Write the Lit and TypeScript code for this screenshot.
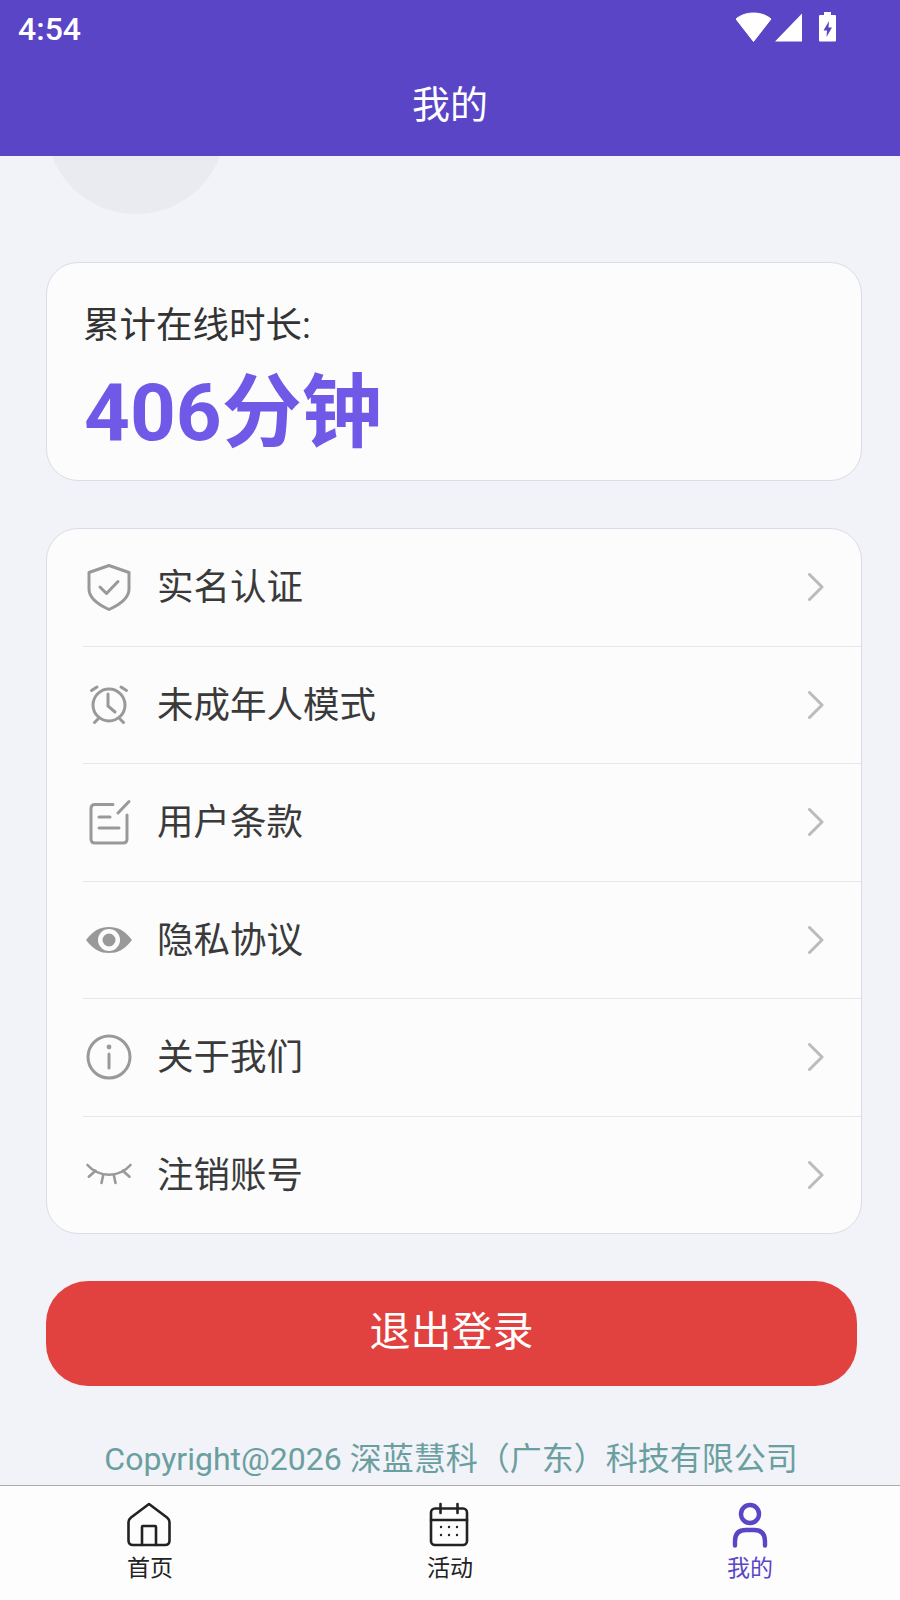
import { LitElement, html, css, svg } from "lit";
import { customElement } from "lit/decorators.js";

const rowIcons = [
  svg`<path d="M24 2.5 L44 9.5 V26 C44 36 34 42 24 46.5 C14 42 4 36 4 26 V9.5 Z" fill="none" stroke="#999" stroke-width="3" stroke-linejoin="round"/><path d="M15 24 L21.5 30.5 L33 18.5" fill="none" stroke="#999" stroke-width="3" stroke-linecap="round" stroke-linejoin="round"/>`,
  svg`<g fill="none" stroke="#999" stroke-width="3" stroke-linecap="round"><circle cx="24" cy="24" r="16"/><path d="M23 13 V25 L30 31"/><path d="M6.5 9.5 L12 6"/><path d="M41.5 9.5 L36 6"/><path d="M13 38 L9.5 41.5"/><path d="M35 38 L38.5 41.5"/></g>`,
  svg`<g fill="none" stroke="#999" stroke-width="3" stroke-linecap="round" stroke-linejoin="round"><path d="M28 6.5 H10 Q6 6.5 6 10.5 V41 Q6 45 10 45 H38 Q42 45 42 41 V17"/><path d="M33 15 L44 3.5"/><path d="M14 19 H25"/><path d="M14 30 H34"/></g>`,
  svg`<path d="M1 24 C9 14 15 11 24 11 C33 11 39 14 47 24 C39 34 33 37 24 37 C15 37 9 34 1 24 Z" fill="#999"/><circle cx="24" cy="24" r="11" fill="#fcfcfd"/><circle cx="24" cy="24" r="6.5" fill="#999"/>`,
  svg`<g fill="none" stroke="#999" stroke-width="3" stroke-linecap="round"><circle cx="24" cy="24" r="21"/><path d="M24 21 V35"/></g><circle cx="24" cy="14" r="2.4" fill="#999"/>`,
  svg`<g fill="none" stroke="#999" stroke-width="2.6" stroke-linecap="round"><path d="M2.5 14 C14 27 34 27 45.5 14"/><path d="M10.5 19.7 L3.8 25.7"/><path d="M18.2 24 L16.5 32"/><path d="M28.8 24 L30.5 32"/><path d="M37.8 19.7 L44.5 25.7"/></g>`,
];

const rows = ["实名认证", "未成年人模式", "用户条款", "隐私协议", "关于我们", "注销账号"];

@customElement("app-root")
export class AppRoot extends LitElement {
  static styles = css`
    :host {
      display: flex;
      flex-direction: column;
      height: 1600px;
      width: 900px;
      overflow: hidden;
      background: #f2f2f9;
      font-family: Roboto, "Noto Sans CJK SC", sans-serif;
      color: #333;
    }
    .header {
      height: 156px;
      flex: none;
      background: #5a45c6;
      color: #fff;
      display: flex;
      flex-direction: column;
      position: relative;
      z-index: 1;
    }
    .status {
      height: 57px;
      padding: 0 64px 0 18px;
      display: flex;
      align-items: center;
      justify-content: space-between;
    }
    .time {
      font: 500 32px/1 Roboto, sans-serif;
    }
    .status-icons {
      display: block;
      margin-bottom: 6px;
    }
    .title {
      text-align: center;
      font-size: 38px;
      line-height: 96px;
    }
    .main {
      flex: 1;
      min-height: 0;
      overflow: hidden;
      padding: 0 38px 0 46px;
      display: flex;
      flex-direction: column;
    }
    .avatar {
      flex: none;
      width: 180px;
      height: 180px;
      border-radius: 50%;
      margin: -122px 0 48px 0;
      background: #e9ebf0;
    }
    .card {
      flex: none;
      background: #fcfcfd;
      border: 1px solid #dcdce8;
      border-radius: 32px;
      box-sizing: border-box;
    }
    .stat {
      height: 219px;
      padding: 38px 36px 0;
      margin-bottom: 47px;
    }
    .stat-label {
      font-size: 36.5px;
      line-height: 50px;
    }
    .stat-value {
      font-size: 80px;
      line-height: 100px;
      font-weight: 700;
      color: #7159e8;
      margin-top: 12px;
      padding-left: 1px;
    }
    .list {
      height: 706px;
      display: flex;
      flex-direction: column;
    }
    .row {
      flex: 1;
      margin-left: 36px;
      padding-right: 37px;
      display: flex;
      align-items: center;
      border-bottom: 1px solid #e8e8ec;
    }
    .row:last-child {
      border-bottom: none;
    }
    .row-icon {
      flex: none;
      width: 48px;
      height: 48px;
      margin: 0 24px 0 2px;
    }
    .row-label {
      flex: 1;
      font-size: 36.5px;
      line-height: 50px;
      color: #3a3a3a;
      padding-top: 2px;
    }
    .chev {
      flex: none;
      width: 16px;
      height: 28px;
    }
    .logout {
      flex: none;
      margin: 47px 5px 0 0;
      height: 105px;
      padding-bottom: 12px;
      box-sizing: border-box;
      border-radius: 42px;
      background: #e2423f;
      color: #fff;
      font-size: 41px;
      display: flex;
      align-items: center;
      justify-content: center;
    }
    .copy {
      flex: none;
      margin: 48px -38px 0 -46px;
      padding-left: 2px;
      text-align: center;
      color: #6a9f9f;
      font-size: 32px;
      line-height: 50px;
    }
    .tabs {
      flex: none;
      height: 115px;
      box-sizing: border-box;
      background: #fdfdfe;
      border-top: 1px solid #aaa;
      display: grid;
      grid-template-columns: repeat(3, 1fr);
    }
    .tab {
      display: flex;
      flex-direction: column;
      align-items: center;
      padding-top: 14px;
      font-size: 23px;
      color: #222;
    }
    .tab svg {
      display: block;
      width: 48px;
      height: 48px;
    }
    .tab span {
      line-height: 32px;
      margin-top: 5px;
    }
    .tab.active {
      color: #5a45c6;
    }
  `;

  render() {
    return html`
      <div class="header">
        <div class="status">
          <span class="time">4:54</span>
          <svg class="status-icons" width="100" height="36" viewBox="0 0 100 36">
            <path d="M0 11 C9 3 26 3 35 11 L17.5 33.5 Z" fill="#fff" stroke="#fff" stroke-linejoin="round"/>
            <path d="M39 33.5 L66 5.5 V33.5 Z" fill="#fff"/>
            <path d="M88 4 H95 V7 H99 Q100 7 100 8 V32.5 Q100 33.5 99 33.5 H84 Q83 33.5 83 32.5 V8 Q83 7 84 7 H88 Z" fill="#fff"/>
            <path d="M93 13 L87.5 22.5 H91 L90.5 29 L96 19.5 H92.5 Z" fill="#5a45c6"/>
          </svg>
        </div>
        <div class="title">我的</div>
      </div>
      <div class="main">
        <div class="avatar"></div>
        <div class="card stat">
          <div class="stat-label">累计在线时长:</div>
          <div class="stat-value">406分钟</div>
        </div>
        <div class="card list">
          ${rows.map(
            (r, i) => html`
              <div class="row">
                <svg class="row-icon" viewBox="0 0 48 48">${rowIcons[i]}</svg>
                <span class="row-label">${r}</span>
                <svg class="chev" viewBox="0 0 16 28">
                  <path d="M1.5 1.5 L14 14 L1.5 26.5" fill="none" stroke="#bbb" stroke-width="3" stroke-linecap="round" stroke-linejoin="round"/>
                </svg>
              </div>
            `
          )}
        </div>
        <div class="logout">退出登录</div>
        <div class="copy">Copyright@2026 深蓝慧科（广东）科技有限公司</div>
      </div>
      <div class="tabs">
        <div class="tab">
          <svg viewBox="0 0 48 48" fill="none" stroke="#222" stroke-width="2.6" stroke-linejoin="round" stroke-linecap="round">
            <path d="M23 4 L41 17.5 Q43.5 19.5 43.5 22 V40.5 Q43.5 45 39 45 H7 Q2.5 45 2.5 40.5 V22 Q2.5 19.5 5 17.5 Z"/>
            <path d="M16 45 V27 Q16 26 17 26 H29 Q30 26 30 27 V45"/>
          </svg>
          <span>首页</span>
        </div>
        <div class="tab">
          <svg viewBox="0 0 48 48" fill="none" stroke="#222" stroke-width="2.6" stroke-linecap="round">
            <rect x="5" y="8.5" width="36" height="36.5" rx="4"/>
            <path d="M5 20 H41"/>
            <path d="M14.5 4 V13"/>
            <path d="M31.5 4 V13"/>
            <g fill="#222" stroke="none">
              <circle cx="15" cy="27" r="1.2"/><circle cx="23" cy="27" r="1.2"/><circle cx="31" cy="27" r="1.2"/>
              <circle cx="15" cy="35" r="1.2"/><circle cx="23" cy="35" r="1.2"/><circle cx="31" cy="35" r="1.2"/>
            </g>
          </svg>
          <span>活动</span>
        </div>
        <div class="tab active">
          <svg viewBox="0 0 48 48" fill="none" stroke="#5a45c6" stroke-width="4.4" stroke-linecap="round">
            <circle cx="24" cy="14" r="9"/>
            <path d="M9 45.5 V41 Q9 30 20 30 H28 Q39 30 39 41 V45.5"/>
          </svg>
          <span>我的</span>
        </div>
      </div>
    `;
  }
}
